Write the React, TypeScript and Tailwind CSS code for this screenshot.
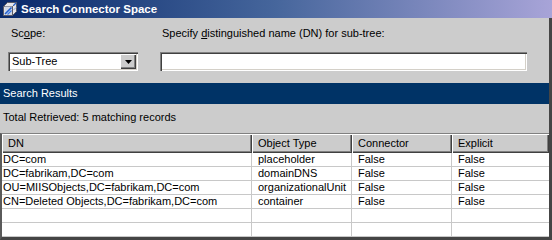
const columns = ['DN', 'Object Type', 'Connector', 'Explicit'];

const rows = [
  ['DC=com', 'placeholder', 'False', 'False'],
  ['DC=fabrikam,DC=com', 'domainDNS', 'False', 'False'],
  ['OU=MIISObjects,DC=fabrikam,DC=com', 'organizationalUnit', 'False', 'False'],
  ['CN=Deleted Objects,DC=fabrikam,DC=com', 'container', 'False', 'False'],
  ['', '', '', ''],
  ['', '', '', ''],
];

const sunken =
  'shadow-[inset_1px_1px_0_#808080,inset_2px_2px_0_#404040,inset_-1px_-1px_0_#ffffff,inset_-2px_-2px_0_#d4d0c8]';
const raised =
  'shadow-[inset_1px_1px_0_#ffffff,inset_-1px_-1px_0_#404040,inset_-2px_-2px_0_#808080]';

function TitleIcon() {
  return (
    <svg width="16" height="16" viewBox="0 0 16 16">
      <path d="M1.5 5.5 L5.5 1.5 L14.5 1.5 L14.5 10.5 L10.5 14.5 L1.5 14.5 Z" fill="#e6e6ea" stroke="#5a5a66" />
      <path d="M1.5 5.5 L10.5 5.5 L14.5 1.5 M10.5 5.5 L10.5 14.5" fill="none" stroke="#5a5a66" />
      <path d="M2.5 5.5 L10 5.5 L10 14 L2.5 14 Z" fill="#cfd6e6" />
      <path d="M3 13 L9.5 6.5" stroke="#1f5fd0" strokeWidth="1.6" />
      <path d="M5.5 13.5 L9.5 9.5" stroke="#3a7ae8" strokeWidth="1.2" />
      <path d="M11.5 4.5 L14 2" stroke="#1f5fd0" strokeWidth="1.2" />
      <path d="M11.5 9 L14 6.5" stroke="#8aa8e0" />
    </svg>
  );
}

function DropArrow() {
  return (
    <svg width="7" height="4" viewBox="0 0 7 4">
      <path d="M0 0 H7 L3.5 4 Z" fill="#000" />
    </svg>
  );
}

export default function App() {
  return (
    <div className="w-[552px] h-[240px] overflow-hidden bg-[#cccccc] font-['Liberation_Sans',Arial,sans-serif] text-[11px] leading-[13px] text-black">
      <div className="h-[18px] flex items-center gap-[3px] pl-[2px] bg-gradient-to-r from-[#08286a] via-[#46669c] to-[#a8a4d8]">
        <TitleIcon />
        <span className="text-white font-bold text-[11.5px]">Search Connector Space</span>
      </div>

      <div className="h-[222px] flex flex-col border-r-[3px] border-r-[#454545]">
        <div className="flex gap-[22px] pl-[8px] pt-[9px]">
          <div className="w-[130px] flex flex-col">
            <span className="pl-[3px]">
              Sc<u>o</u>pe:
            </span>
            <div className={`mt-[12px] h-[19px] bg-white flex items-center justify-between pl-[4px] pr-[2px] ${sunken}`}>
              <span>Sub-Tree</span>
              <div className={`w-[16px] h-[15px] bg-[#cccccc] flex items-center justify-center ${raised}`}>
                <DropArrow />
              </div>
            </div>
          </div>
          <div className="w-[367px] flex flex-col">
            <span className="pl-[2px]">
              Specify <u>d</u>istinguished name (DN) for sub-tree:
            </span>
            <div className={`mt-[12px] h-[19px] bg-white ${sunken}`} />
          </div>
        </div>

        <div className="mt-[12px] h-[21px] bg-[#003366] text-white flex items-center pl-[3px]">Search Results</div>

        <div className="mt-[7px] pl-[3px]">Total Retrieved: 5 matching records</div>

        <div className="mt-[9px] flex-1 bg-white border-t border-t-[#808080] border-l-2 border-l-[#5a5a5a] border-b-[3px] border-b-[#454545]">
          <div className="grid grid-cols-[250px_100px_100px_97px]">
            {columns.map((c) => (
              <div key={c} className={`h-[19px] bg-[#cccccc] flex items-center pl-[6px] ${raised}`}>
                {c}
              </div>
            ))}
            {rows.map((r, i) =>
              r.map((cell, j) => (
                <div
                  key={`${i}-${j}`}
                  className={`h-[14px] border-b border-b-[#c8c8c8] whitespace-nowrap overflow-hidden ${
                    j === 0 ? 'pl-[1px]' : 'pl-[6px]'
                  } ${j < 3 ? 'border-r border-r-[#c8c8c8]' : ''}`}
                >
                  {cell}
                </div>
              ))
            )}
          </div>
        </div>
      </div>
    </div>
  );
}
